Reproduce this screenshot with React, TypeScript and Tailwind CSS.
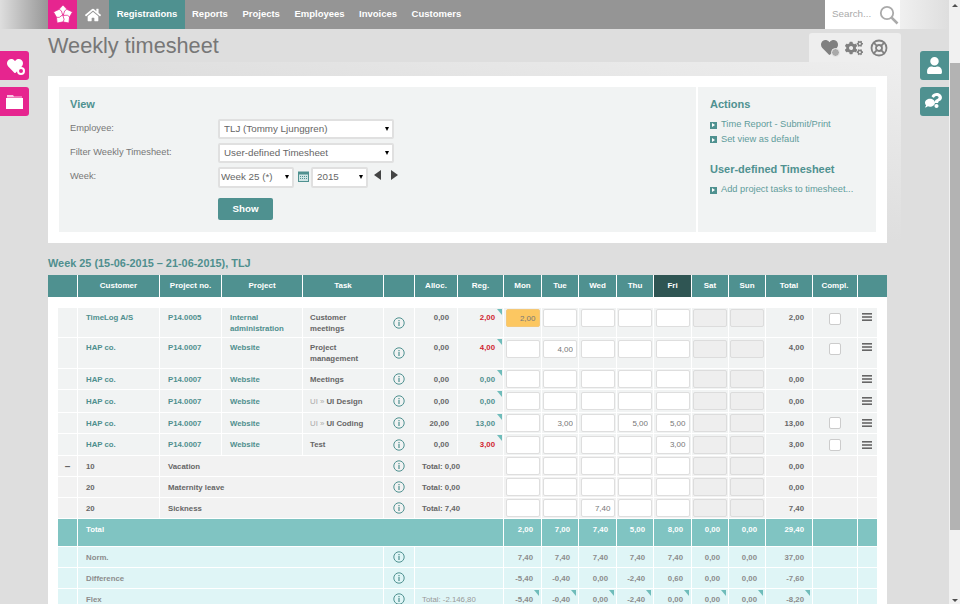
import React from "react";
import { FaHome, FaHeart, FaCogs, FaUser, FaComment, FaQuestion } from "react-icons/fa";
import { LifeBuoy } from "lucide-react";

const NAV = ["Reports", "Projects", "Employees", "Invoices", "Customers"];
const HEAD = ["", "Customer", "Project no.", "Project", "Task", "", "Alloc.", "Reg.", "Mon", "Tue", "Wed", "Thu", "Fri", "Sat", "Sun", "Total", "Compl.", ""];
const BODY_GRID = "grid gap-x-px mb-px grid-cols-[19px_81px_61px_80px_80px_30px_42px_45px_37px_36px_37px_36px_37px_36px_36px_46px_44px_19px]";

type Row = {
  h: string; tall?: string; inputPt?: string; customer: string; no: string; project: string; prefix?: string; task: string;
  alloc: string; reg: string; red?: boolean; days: string[]; total: string; check?: boolean; hl?: boolean;
};

const ROWS: Row[] = [
  { h: "h-[29px]", tall: "pt-[4px]", inputPt: "pt-[1px]", customer: "TimeLog A/S", no: "P14.0005", project: "Internal administration", task: "Customer meetings", alloc: "0,00", reg: "2,00", red: true, days: ["2,00", "", "", "", ""], total: "2,00", check: true, hl: true },
  { h: "h-[30px]", tall: "pt-[4px]", inputPt: "pt-[2px]", customer: "HAP co.", no: "P14.0007", project: "Website", task: "Project management", alloc: "0,00", reg: "4,00", red: true, days: ["", "4,00", "", "", ""], total: "4,00", check: true },
  { h: "h-[20px]", customer: "HAP co.", no: "P14.0007", project: "Website", task: "Meetings", alloc: "0,00", reg: "0,00", days: ["", "", "", "", ""], total: "0,00" },
  { h: "h-[22px]", customer: "HAP co.", no: "P14.0007", project: "Website", prefix: "UI » ", task: "UI Design", alloc: "0,00", reg: "0,00", days: ["", "", "", "", ""], total: "0,00" },
  { h: "h-[20px]", customer: "HAP co.", no: "P14.0007", project: "Website", prefix: "UI » ", task: "UI Coding", alloc: "20,00", reg: "13,00", days: ["", "3,00", "", "5,00", "5,00"], total: "13,00", check: true },
  { h: "h-[21px]", customer: "HAP co.", no: "P14.0007", project: "Website", task: "Test", alloc: "0,00", reg: "3,00", red: true, days: ["", "", "", "", "3,00"], total: "3,00", check: true },
];

const ABSENCE = [
  { code: "10", name: "Vacation", sum: "Total: 0,00", wed: "", total: "0,00", minus: true },
  { code: "20", name: "Maternity leave", sum: "Total: 0,00", wed: "", total: "0,00" },
  { code: "20", name: "Sickness", sum: "Total: 7,40", wed: "7,40", total: "7,40" },
];

const SUMMARY = [
  { label: "Norm.", h: "h-[20px]", days: ["7,40", "7,40", "7,40", "7,40", "7,40", "0,00", "0,00"], total: "37,00" },
  { label: "Difference", h: "h-[20px]", days: ["-5,40", "-0,40", "0,00", "-2,40", "0,60", "0,00", "0,00"], total: "-7,60" },
  { label: "Flex", h: "h-[20px]", sum: "Total: -2.146,80", flag: true, days: ["-5,40", "-0,40", "0,00", "-2,40", "0,00", "0,00", "0,00"], total: "-8,20" },
];

function Corner({ className = "" }: { className?: string }) {
  return (
    <span className={`absolute top-px w-0 h-0 border-t-[6px] border-t-[#6fbcba] border-l-[5px] border-l-transparent ${className}`} />
  );
}

function Info() {
  return (
    <svg width="12" height="12" viewBox="0 0 12 12" fill="none" stroke="#4f9190">
      <circle cx="6" cy="6" r="5.2" strokeWidth="1" />
      <path d="M6 5v4M6 3v1.2" strokeWidth="1.2" />
    </svg>
  );
}

function Burger() {
  return (
    <svg width="10" height="8" viewBox="0 0 10 8" fill="#666">
      <rect width="10" height="1.6" />
      <rect y="3.2" width="10" height="1.6" />
      <rect y="6.4" width="10" height="1.6" />
    </svg>
  );
}

function DayInput({ value, disabled, hl }: { value?: string; disabled?: boolean; hl?: boolean }) {
  const tone = disabled
    ? "bg-[#eeeeee] border-[#dcdcdc]"
    : hl
      ? "bg-[#fcc761] border-[#f4c878]"
      : "bg-white border-[#dedede]";
  return (
    <input
      readOnly
      disabled={disabled}
      value={value ?? ""}
      className={`w-[34px] h-[18px] border rounded-[2px] text-right pr-[3px] text-[8px] font-normal text-[#777] outline-none ${tone}`}
    />
  );
}

function Days({ days, cell, inputPt, hl }: { days: string[]; cell: string; inputPt?: string; hl?: boolean }) {
  const pos = inputPt ? `items-start ${inputPt}` : "items-center";
  return (
    <>
      {days.map((d, i) => (
        <div key={i} className={`${cell} flex justify-center ${pos}`}>
          <DayInput value={d} hl={hl && i === 0} />
        </div>
      ))}
      {[0, 1].map((i) => (
        <div key={`off${i}`} className={`${cell} flex justify-center ${pos}`}>
          <DayInput disabled />
        </div>
      ))}
    </>
  );
}

function Select({ label, className, pad = "pl-[4px]" }: { label: string; className: string; pad?: string }) {
  return (
    <div className={`relative ${className}`}>
      <select className={`appearance-none w-full h-full bg-white border-2 border-[#e0e0e0] rounded-[2px] text-[9.8px] text-[#666] outline-none ${pad}`}>
        <option>{label}</option>
      </select>
      <span className="absolute right-[5px] top-[8px] w-0 h-0 border-x-[2.5px] border-x-transparent border-t-[4px] border-t-black pointer-events-none" />
    </div>
  );
}

function ActionLink({ children }: { children: React.ReactNode }) {
  return (
    <div className="flex items-center gap-[4px] h-[14.5px] text-[9.3px] text-[#5f9c9b]">
      <span className="w-[7px] h-[7px] bg-[#4f9190] flex items-center justify-center">
        <span className="w-0 h-0 border-y-[2px] border-y-transparent border-l-[3px] border-l-white" />
      </span>
      {children}
    </div>
  );
}

function SideButton({ className, children }: { className: string; children: React.ReactNode }) {
  return <div className={`absolute w-[29px] h-[29px] flex items-center justify-center text-white ${className}`}>{children}</div>;
}

export default function App() {
  const base = "bg-[#f1f3f3]";
  const gray = "bg-[#f2f2f2]";
  const teal = "bg-[#80c4c2]";
  const cyan = "bg-[#dff5f6]";
  return (
    <div className="relative w-[960px] h-[604px] overflow-hidden bg-[#dedede] font-['Liberation_Sans',Arial,sans-serif]">
      {/* top bar */}
      <header className="flex h-[29px] w-[949px]">
        <div className="w-[48px] bg-linear-to-r from-[#dedede] to-[#979797]" />
        <div className="w-[29px] bg-[#e6258f] flex items-center justify-center">
          <svg width="20" height="20" viewBox="-10 -10 20 20" fill="white" stroke="#e6258f" strokeWidth="0.7">
            {[0, 72, 144, 216, 288].map((a) => (
              <path key={a} transform={`rotate(${a})`} d="M0-10 4.2-5.4 3.4-2.8 0-.4-3.4-2.8-4.2-5.4Z" />
            ))}
          </svg>
        </div>
        <div className="flex w-[748px] bg-[#959595] text-white font-bold text-[9.5px]">
          <div className="w-[32px] flex items-center justify-center text-white">
            <FaHome size={16} />
          </div>
          <div className="w-[76px] bg-[#4f9190] flex items-center justify-center">Registrations</div>
          <nav className="flex items-center gap-[14.5px] pl-[7px]">
            {NAV.map((n) => (
              <span key={n}>{n}</span>
            ))}
          </nav>
        </div>
        <div className="w-[75px] bg-white flex items-center pl-[7px] pr-[1px] justify-between">
          <span className="text-[9.8px] text-[#aaa]">Search...</span>
          <svg width="20" height="20" viewBox="0 0 20 20" fill="none" stroke="#aaa">
            <circle cx="8" cy="8" r="6.2" strokeWidth="1.8" />
            <path d="M12.6 12.6 18.5 18.5" strokeWidth="2.6" />
          </svg>
        </div>
        <div className="flex-1 bg-linear-to-r from-[#f0f0f0] to-[#dedede]" />
      </header>

      <main className="ml-[48px] w-[853px]">
        <div className="flex justify-between items-start pt-[4px] h-[33px]">
          <h1 className="text-[21.7px] leading-[26px] text-[#777] font-normal">Weekly timesheet</h1>
          <div className="w-[92px] h-[29px] bg-[#eeeeee] rounded-t-[3px] flex items-center justify-center gap-[7px] text-[#808080] pr-[2px]">
            <span className="relative">
              <FaHeart size={17} />
              <span className="absolute -right-[2px] -bottom-[1px] w-[9px] h-[9px] rounded-full bg-[#aaa] border-[1.5px] border-[#eee]" />
            </span>
            <FaCogs size={18} />
            <LifeBuoy size={18} strokeWidth={2.4} />
          </div>
        </div>

        <section className="bg-linear-to-tr from-[#dedede] via-[#dedede] to-[#eeeeee] pt-[14px]">
          <div className="w-[839px] bg-white p-[11px]">
            <div className="flex h-[145px]">
              <div className="w-[637px] bg-[#f1f3f3] pl-[11px] pt-[11px]">
                <h2 className="text-[11px] leading-[13px] font-bold text-[#4f9190] mb-[8px]">View</h2>
                <div className="grid grid-cols-[148px_1fr] gap-y-[4px] text-[9.3px] text-[#777]">
                  <span className="pt-[3px]">Employee:</span>
                  <Select label="TLJ (Tommy Ljunggren)" className="w-[176px] h-[20px]" />
                  <span className="pt-[3px]">Filter Weekly Timesheet:</span>
                  <Select label="User-defined Timesheet" className="w-[176px] h-[20px]" />
                  <span className="pt-[3px]">Week:</span>
                  <div className="flex items-start">
                    <Select label="Week 25 (*)" className="w-[76px] h-[21px]" pad="pl-[1px]" />
                    <svg className="ml-[4px] mr-[2px] mt-[4px]" width="11" height="11" viewBox="0 0 11 11">
                      <rect x="0.5" y="1" width="10" height="9.5" fill="#cfe5e5" stroke="#4f9190" />
                      <rect x="0.5" y="1" width="10" height="2.5" fill="#4f9190" />
                      <path d="M2 5.5h7M2 7.5h7" stroke="#4f9190" strokeDasharray="1 1" />
                    </svg>
                    <Select label="2015" className="w-[57px] h-[21px]" />
                    <div className="flex ml-[6px] gap-[10px] mt-[3px]">
                      <span className="w-0 h-0 border-y-[5.5px] border-y-transparent border-r-[7px] border-r-[#444]" />
                      <span className="w-0 h-0 border-y-[5.5px] border-y-transparent border-l-[7px] border-l-[#444]" />
                    </div>
                  </div>
                  <span />
                  <button className="mt-[6px] w-[55px] h-[22px] bg-[#4f9190] rounded-[2px] text-white font-bold text-[9.75px]">Show</button>
                </div>
              </div>
              <aside className="flex-1 ml-[2px] bg-[#f1f3f3] pl-[12px] pt-[11px]">
                <h2 className="text-[11px] leading-[13px] font-bold text-[#4f9190] mb-[7px]">Actions</h2>
                <ActionLink>Time Report - Submit/Print</ActionLink>
                <ActionLink>Set view as default</ActionLink>
                <h2 className="text-[11px] leading-[13px] font-bold text-[#4f9190] mt-[16px] mb-[7px]">User-defined Timesheet</h2>
                <ActionLink>Add project tasks to timesheet...</ActionLink>
              </aside>
            </div>
          </div>
        </section>

        <h3 className="text-[10.9px] leading-[14px] font-bold text-[#4f8f8e] pt-[13px] h-[33px] -mb-px">
          Week 25 (15-06-2015 – 21-06-2015), TLJ
        </h3>

        <div className="w-[839px] bg-white">
          <div className="grid gap-x-px h-[22px] grid-cols-[29px_81px_61px_80px_80px_30px_42px_45px_37px_36px_37px_36px_37px_36px_36px_46px_44px_29px]">
            {HEAD.map((h, i) => (
              <div
                key={i}
                className={`flex items-center justify-center text-[8px] font-bold text-white ${h === "Fri" ? "bg-[#2f5553]" : "bg-[#4f9190]"}`}
              >
                {h}
              </div>
            ))}
          </div>

          <div className="pl-[10px] pt-[11px] text-[7.8px] leading-[11px] font-bold text-[#666]">
            {ROWS.map((r, i) => {
              const al = r.tall ? `${r.tall}` : "flex items-center";
              const link = `${base} pl-[8px] text-[#4f8f8e] ${al}`;
              return (
                <div key={i} className={`${BODY_GRID} ${r.h}`}>
                  <div className={base} />
                  <div className={link}>{r.customer}</div>
                  <div className={`${link} pl-[7px]`}>{r.no}</div>
                  <div className={`${link} pl-[7px]`}>{r.project}</div>
                  <div className={`${base} pl-[7px] pr-[24px] ${al}`}>
                    {r.prefix && <span className="font-normal text-[#aaa] whitespace-pre">{r.prefix}</span>}
                    <span className={r.prefix ? "whitespace-nowrap" : ""}>{r.task}</span>
                  </div>
                  <div className={`${base} flex items-center justify-center`}><Info /></div>
                  <div className={`${base} text-right pr-[8px] ${r.tall ? r.tall : "flex items-center justify-end"}`}>{r.alloc}</div>
                  <div className={`${base} relative text-right pr-[8px] ${r.tall ? r.tall : "flex items-center justify-end"} ${r.red ? "text-[#d0222f]" : "text-[#4f8f8e]"}`}>
                    {r.reg}
                    <Corner className="right-[1px]" />
                  </div>
                  <Days days={r.days} cell={base} inputPt={r.inputPt} hl={r.hl} />
                  <div className={`${base} text-right pr-[8px] ${r.tall ? r.tall : "flex items-center justify-end"}`}>{r.total}</div>
                  <div className={`${base} flex justify-center ${r.tall ? "items-start pt-[5px]" : "items-center"}`}>
                    {r.check && <input type="checkbox" readOnly className="appearance-none w-[12px] h-[12px] bg-white border border-[#ccc] rounded-[2px]" />}
                  </div>
                  <div className={`${base} flex justify-center pr-[2px] ${r.tall ? "items-start pt-[5px]" : "items-center"}`}><Burger /></div>
                </div>
              );
            })}

            {ABSENCE.map((a, i) => (
              <div key={i} className={`${BODY_GRID} h-[20px]`}>
                <div className={`${gray} flex items-center justify-center text-[10px]`}>{a.minus ? "–" : ""}</div>
                <div className={`${gray} flex items-center pl-[8px]`}>{a.code}</div>
                <div className={`${gray} col-span-3 flex items-center pl-[8px]`}>{a.name}</div>
                <div className={`${gray} flex items-center justify-center`}><Info /></div>
                <div className={`${gray} col-span-2 flex items-center pl-[7px]`}>{a.sum}</div>
                <Days days={["", "", a.wed, "", ""]} cell={gray} />
                <div className={`${gray} flex items-center justify-end pr-[8px]`}>{a.total}</div>
                <div className={gray} />
                <div className={gray} />
              </div>
            ))}

            <div className={`${BODY_GRID} h-[27px] text-white`}>
              <div className={teal} />
              <div className={`${teal} col-span-7 pl-[8px] pt-[5px]`}>Total</div>
              {["2,00", "7,00", "7,40", "5,00", "8,00", "0,00", "0,00", "29,40"].map((v, i) => (
                <div key={i} className={`${teal} text-right pr-[8px] pt-[5px]`}>{v}</div>
              ))}
              <div className={teal} />
              <div className={teal} />
            </div>

            {SUMMARY.map((s) => (
              <div key={s.label} className={`${BODY_GRID} ${s.h} text-[#8c8c8c]`}>
                <div className={cyan} />
                <div className={`${cyan} col-span-4 flex items-center pl-[8px]`}>{s.label}</div>
                <div className={`${cyan} flex items-center justify-center`}><Info /></div>
                <div className={`${cyan} col-span-2 flex items-center pl-[7px] font-normal text-[#999]`}>{s.sum}</div>
                {[...s.days, s.total].map((v, i) => (
                  <div key={i} className={`${cyan} relative flex items-center justify-end pr-[8px]`}>
                    {v}
                    {s.flag && <Corner className="right-[2px]" />}
                  </div>
                ))}
                <div className={cyan} />
                <div className={cyan} />
              </div>
            ))}
          </div>
        </div>
      </main>

      {/* floating side buttons */}
      <SideButton className="left-0 top-[51px] bg-[#e6258f] rounded-r-[3px]">
        <span className="relative">
          <FaHeart size={16} />
          <span className="absolute -right-[2px] -bottom-[1px] w-[8px] h-[8px] rounded-full bg-[#e6258f] border-2 border-white" />
        </span>
      </SideButton>
      <SideButton className="left-0 top-[87px] bg-[#e6258f] rounded-r-[3px]">
        <svg width="17" height="14" viewBox="0 0 17 14" fill="white">
          <path d="M1 0h6l1 1.5h8v1H1Z" opacity="0.75" />
          <rect y="3" width="17" height="11" />
        </svg>
      </SideButton>
      <SideButton className="left-[920px] top-[51px] bg-[#4f9190] rounded-l-[3px]">
        <FaUser size={17} />
      </SideButton>
      <SideButton className="left-[920px] top-[87px] bg-[#4f9190] rounded-l-[3px]">
        <span className="relative w-[19px] h-[17px]">
          <FaComment size={10} className="absolute left-0 top-[5px]" />
          <FaQuestion size={15} className="absolute right-0 top-0" />
        </span>
      </SideButton>

      {/* page scrollbar */}
      <div className="absolute right-0 top-0 w-[11px] h-[604px] bg-[#f1f1f1]">
        <span className="absolute left-[3px] top-[4px] w-0 h-0 border-x-[3px] border-x-transparent border-b-[3px] border-b-[#505050]" />
        <div className="absolute left-[1px] right-0 top-[63px] h-[467px] bg-[#b3b3b3]" />
        <span className="absolute left-[3px] bottom-[2px] w-0 h-0 border-x-[3px] border-x-transparent border-t-[3px] border-t-[#505050]" />
      </div>
    </div>
  );
}
